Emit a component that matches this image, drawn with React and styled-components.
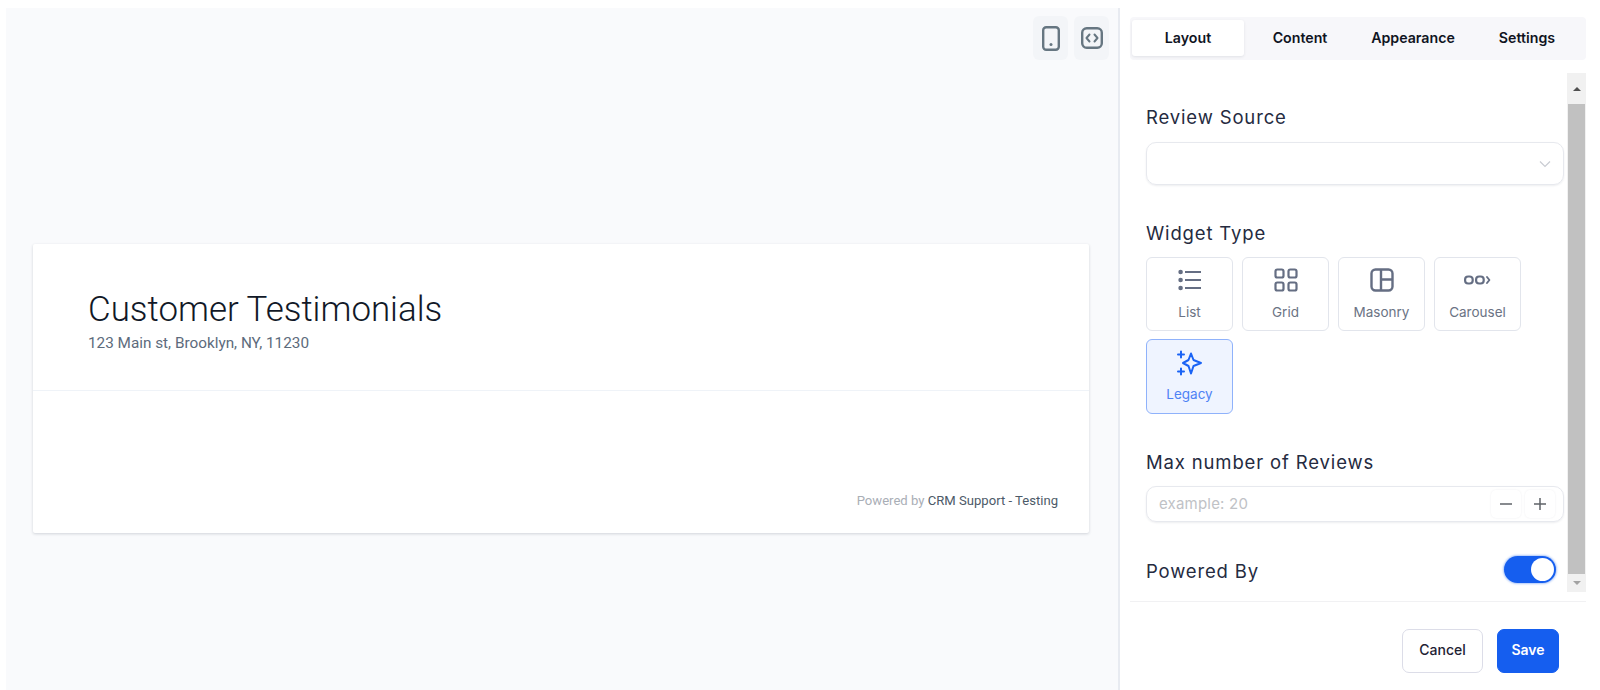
import styled, { createGlobalStyle } from "styled-components";

const GlobalStyle = createGlobalStyle`
  * { box-sizing: border-box; }
  html, body { margin: 0; padding: 0; background: #ffffff; }
  body { font-family: "Inter", "Liberation Sans", sans-serif; }
`;

const Page = styled.div`
  display: flex;
  width: 1600px;
  height: 690px;
  padding: 8px 0 0 6px;
  overflow: hidden;
`;

const Preview = styled.main`
  width: 1114px;
  background: #f9fafc;
  border-right: 2px solid #e8ebf1;
  display: flex;
  flex-direction: column;
  padding: 8px 0 0 27px;
`;

const Toolbar = styled.div`
  display: flex;
  justify-content: flex-end;
  gap: 6px;
  padding-right: 9px;
`;

const ToolButton = styled.button`
  width: 35px;
  height: 44px;
  border: 0;
  border-radius: 6px;
  background: #f3f5f8;
  color: #667681;
  display: flex;
  align-items: center;
  justify-content: center;
  padding: 0;
`;

const Card = styled.section`
  width: 1056px;
  height: 289px;
  margin-top: 184px;
  background: #ffffff;
  border-radius: 2px;
  box-shadow: 0 1px 3px rgba(30, 40, 60, 0.18);
  display: flex;
  flex-direction: column;
`;

const CardHeader = styled.header`
  height: 147px;
  padding: 45px 55px 0;
  border-bottom: 1px solid #eff3f8;
  font-family: "Roboto", sans-serif;
`;

const Title = styled.h1`
  margin: 0;
  font-size: 34.9px;
  line-height: 42px;
  font-weight: 300;
  color: #111827;
`;

const Address = styled.p`
  margin: 1px 0 0;
  font-size: 15.3px;
  line-height: 22px;
  color: #5d6b7c;
`;

const CardFooter = styled.footer`
  margin-top: auto;
  padding: 0 31px 23px 0;
  text-align: right;
  font-family: "Roboto", sans-serif;
  font-size: 13.1px;
  line-height: 18px;
  color: #a9aeb6;
  span { color: #4d5a68; }
`;

const Side = styled.aside`
  flex: 1;
  display: flex;
  flex-direction: column;
  padding: 9px 14px 0 10px;
`;

const Tabs = styled.nav`
  height: 43px;
  display: flex;
  padding: 3px 2px;
  background: #f7f7fa;
  border-radius: 4px;
`;

const Tab = styled.div`
  flex: ${(p) => p.$flex};
  height: 36px;
  padding-bottom: 2px;
  display: flex;
  align-items: center;
  justify-content: center;
  font-size: 14.2px;
  font-weight: 600;
  color: #10141f;
  border-radius: 3px;
  background: ${(p) => (p.$active ? "#ffffff" : "transparent")};
  box-shadow: ${(p) => (p.$active ? "0 1px 3px rgba(30, 40, 60, 0.1)" : "none")};
`;

const ScrollArea = styled.div`
  height: 519px;
  margin-top: 13px;
  display: flex;
`;

const Form = styled.div`
  flex: 1;
  padding: 32px 3px 0 16px;
`;

const Label = styled.div`
  font-size: 18.5px;
  line-height: 24px;
  letter-spacing: 0.85px;
  color: #252b3f;
  margin-top: ${(p) => p.$top || 0}px;
  margin-bottom: ${(p) => p.$bottom || 0}px;
`;

const Select = styled.div`
  height: 43px;
  border: 1px solid #e7e9ee;
  border-radius: 10px;
  box-shadow: 0 1px 2px rgba(30, 40, 60, 0.08);
  display: flex;
  align-items: center;
  justify-content: flex-end;
  padding-right: 11px;
  color: #c9ccd2;
`;

const TypeGrid = styled.div`
  display: grid;
  grid-template-columns: repeat(4, 87px);
  grid-auto-rows: 74px;
  gap: 8px 9px;
`;

const TypeCard = styled.div`
  display: flex;
  flex-direction: column;
  align-items: center;
  height: ${(p) => (p.$active ? "75px" : "74px")};
  padding-top: 10px;
  border: 1px solid ${(p) => (p.$active ? "#8fb2fb" : "#e2e5ec")};
  border-radius: 6px;
  background: ${(p) => (p.$active ? "#eff4ff" : "#ffffff")};
  color: ${(p) => (p.$active ? "#1a63f5" : "#656e83")};
  font-size: 13.5px;
  svg { flex: none; }
`;

const TypeName = styled.span`
  margin-top: ${(p) => (p.$active ? "9px" : "11px")};
  line-height: 18px;
  color: ${(p) => (p.$active ? "#4e82f5" : "#6b7384")};
`;

const NumberField = styled.div`
  height: 36px;
  border: 1px solid #e7e9ee;
  border-radius: 10px;
  box-shadow: 0 1px 2px rgba(30, 40, 60, 0.08);
  display: flex;
  align-items: center;
  padding: 0 8px 0 12px;
  gap: 4px;
`;

const Placeholder = styled.span`
  flex: 1;
  padding-bottom: 1px;
  font-size: 15px;
  letter-spacing: 0.2px;
  color: #c0c2c6;
`;

const Stepper = styled.div`
  width: 30px;
  height: 28px;
  border-radius: 5px;
  box-shadow: 0 0 2px rgba(30, 40, 60, 0.08);
  display: flex;
  align-items: center;
  justify-content: center;
  color: #5f6368;
`;

const ToggleRow = styled.div`
  display: flex;
  align-items: center;
  justify-content: space-between;
  height: 29px;
  margin-top: 33px;
  padding-right: 8px;
`;

const Toggle = styled.div`
  width: 52px;
  height: 27px;
  padding: 2px;
  border-radius: 14px;
  background: #155eef;
  box-shadow: 0 0 2px 1px rgba(21, 94, 239, 0.35);
  display: flex;
  justify-content: flex-end;
`;

const Knob = styled.div`
  width: 23px;
  height: 23px;
  border-radius: 50%;
  background: #ffffff;
`;

const Scrollbar = styled.div`
  width: 19px;
  background: #f1f1f1;
  display: flex;
  flex-direction: column;
  align-items: center;
`;

const ArrowBox = styled.div`
  height: ${(p) => p.$height}px;
  display: flex;
  align-items: center;
  justify-content: center;
`;

const Arrow = styled.div`
  width: 0;
  height: 0;
  border-left: 4px solid transparent;
  border-right: 4px solid transparent;
  ${(p) => (p.$down ? "border-top: 4px solid #a3a3a3;" : "border-bottom: 4px solid #505050;")}
`;

const Thumb = styled.div`
  width: 17px;
  height: 470px;
  background: #c1c1c1;
`;

const Footer = styled.footer`
  margin-top: 9px;
  border-top: 1px solid #f1f1f3;
  padding: 27px 27px 0 0;
  display: flex;
  justify-content: flex-end;
  gap: 14px;
`;

const Button = styled.button`
  height: 44px;
  width: ${(p) => (p.$primary ? "62px" : "81px")};
  padding: 0 0 3px;
  border-radius: 7px;
  border: 1px solid ${(p) => (p.$primary ? "#155eef" : "#dcdde8")};
  background: ${(p) => (p.$primary ? "#155eef" : "#ffffff")};
  color: ${(p) => (p.$primary ? "#ffffff" : "#1e2233")};
  font-family: "Inter", sans-serif;
  font-size: 14px;
  font-weight: ${(p) => (p.$primary ? 600 : 500)};
`;

const PhoneIcon = () => (
  <svg width="18" height="25" viewBox="0 0 18 25" fill="none" stroke="currentColor" strokeWidth="2.4">
    <rect x="1.2" y="1.2" width="15.6" height="22.6" rx="3" />
    <circle cx="9" cy="18.5" r="1.5" fill="currentColor" stroke="none" />
  </svg>
);

const CodeIcon = () => (
  <svg width="22" height="22" viewBox="0 0 22 22" fill="none" stroke="currentColor" strokeWidth="2.4" strokeLinecap="round" strokeLinejoin="round">
    <rect x="1.2" y="1.2" width="19.6" height="19.6" rx="4.5" />
    <path d="M8.5 7.5 5.5 11l3 3.5M13.5 7.5l3 3.5-3 3.5" strokeWidth="2" />
  </svg>
);

const ListIcon = () => (
  <svg width="24" height="24" viewBox="0 0 24 24" fill="none" stroke="currentColor" strokeWidth="2.2">
    <path d="M7 4h16M7 12h16M7 20h16" />
    <circle cx="2.6" cy="4" r="2.3" fill="currentColor" stroke="none" />
    <circle cx="2.6" cy="12" r="2.3" fill="currentColor" stroke="none" />
    <circle cx="2.6" cy="20" r="2.3" fill="currentColor" stroke="none" />
  </svg>
);

const GridIcon = () => (
  <svg width="24" height="24" viewBox="0 0 24 24" fill="none" stroke="currentColor" strokeWidth="2.2">
    <rect x="1.5" y="1.5" width="8" height="8" rx="1.8" />
    <rect x="14.5" y="1.5" width="8" height="8" rx="1.8" />
    <rect x="1.5" y="14.5" width="8" height="8" rx="1.8" />
    <rect x="14.5" y="14.5" width="8" height="8" rx="1.8" />
  </svg>
);

const MasonryIcon = () => (
  <svg width="24" height="24" viewBox="0 0 24 24" fill="none" stroke="currentColor" strokeWidth="2.4">
    <rect x="1.5" y="1.5" width="21" height="21" rx="4" />
    <path d="M11 2v20M11 11.5h11" />
  </svg>
);

const CarouselIcon = () => (
  <svg width="27" height="24" viewBox="0 0 27 24" fill="none" stroke="currentColor" strokeWidth="2.2" strokeLinecap="round" strokeLinejoin="round">
    <rect x="1.1" y="8.5" width="7.6" height="7" rx="3" />
    <rect x="12.1" y="8.5" width="7.6" height="7" rx="3" />
    <path d="m23 9 2.4 3-2.4 3" strokeWidth="1.9" />
  </svg>
);

const SparkleIcon = () => (
  <svg width="26" height="26" viewBox="0 0 26 26" fill="none" stroke="currentColor" strokeWidth="2" strokeLinecap="round" strokeLinejoin="round">
    <path d="M14 3.5 16.5 10 24 13 16.5 16 14 23.5 11.5 16 6 13 11.5 10z" />
    <path d="M4 1.5v6M1 4.5h6M4 18.5v6M1 21.5h6" />
  </svg>
);

const ChevronIcon = () => (
  <svg width="14" height="14" viewBox="0 0 14 14" fill="none" stroke="currentColor" strokeWidth="1.2">
    <path d="m2 4.5 5 5 5-5" />
  </svg>
);

const MinusIcon = () => (
  <svg width="14" height="14" viewBox="0 0 14 14" stroke="currentColor" strokeWidth="1.5">
    <path d="M1 7h12" />
  </svg>
);

const PlusIcon = () => (
  <svg width="14" height="14" viewBox="0 0 14 14" stroke="currentColor" strokeWidth="1.5">
    <path d="M1 7h12M7 1v12" />
  </svg>
);

const tabs = [
  { name: "Layout", flex: "0 0 112px", active: true },
  { name: "Content", flex: "0 0 112px" },
  { name: "Appearance", flex: "0 0 114px" },
  { name: "Settings", flex: "1" },
];

const types = [
  { name: "List", icon: <ListIcon /> },
  { name: "Grid", icon: <GridIcon /> },
  { name: "Masonry", icon: <MasonryIcon /> },
  { name: "Carousel", icon: <CarouselIcon /> },
  { name: "Legacy", icon: <SparkleIcon />, active: true },
];

export default function App() {
  return (
    <>
      <GlobalStyle />
      <Page>
        <Preview>
          <Toolbar>
            <ToolButton><PhoneIcon /></ToolButton>
            <ToolButton><CodeIcon /></ToolButton>
          </Toolbar>
          <Card>
            <CardHeader>
              <Title>Customer Testimonials</Title>
              <Address>123 Main st, Brooklyn, NY, 11230</Address>
            </CardHeader>
            <CardFooter>
              Powered by <span>CRM Support - Testing</span>
            </CardFooter>
          </Card>
        </Preview>
        <Side>
          <Tabs>
            {tabs.map((t) => (
              <Tab key={t.name} $flex={t.flex} $active={t.active}>{t.name}</Tab>
            ))}
          </Tabs>
          <ScrollArea>
            <Form>
              <Label $bottom={13}>Review Source</Label>
              <Select><ChevronIcon /></Select>
              <Label $top={36} $bottom={12}>Widget Type</Label>
              <TypeGrid>
                {types.map((t) => (
                  <TypeCard key={t.name} $active={t.active}>
                    {t.icon}
                    <TypeName $active={t.active}>{t.name}</TypeName>
                  </TypeCard>
                ))}
              </TypeGrid>
              <Label $top={37} $bottom={12}>Max number of Reviews</Label>
              <NumberField>
                <Placeholder>example: 20</Placeholder>
                <Stepper><MinusIcon /></Stepper>
                <Stepper><PlusIcon /></Stepper>
              </NumberField>
              <ToggleRow>
                <Label $top={3}>Powered By</Label>
                <Toggle><Knob /></Toggle>
              </ToggleRow>
            </Form>
            <Scrollbar>
              <ArrowBox $height={31}><Arrow /></ArrowBox>
              <Thumb />
              <ArrowBox $height={18}><Arrow $down /></ArrowBox>
            </Scrollbar>
          </ScrollArea>
          <Footer>
            <Button>Cancel</Button>
            <Button $primary>Save</Button>
          </Footer>
        </Side>
      </Page>
    </>
  );
}
